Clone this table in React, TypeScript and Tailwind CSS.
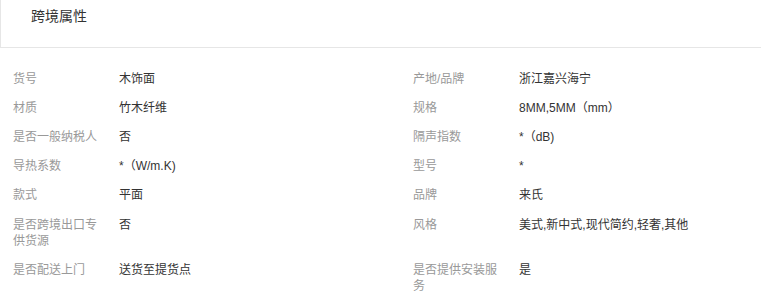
import React from "react";

const rows: [string, string, string, string][] = [
  ["货号", "木饰面", "产地/品牌", "浙江嘉兴海宁"],
  ["材质", "竹木纤维", "规格", "8MM,5MM（mm）"],
  ["是否一般纳税人", "否", "隔声指数", "*（dB)"],
  ["导热系数", "*（W/m.K)", "型号", "*"],
  ["款式", "平面", "品牌", "来氏"],
  ["是否跨境出口专供货源", "否", "风格", "美式,新中式,现代简约,轻奢,其他"],
  ["是否配送上门", "送货至提货点", "是否提供安装服务", "是"],
];

export default function App() {
  return (
    <div
      className="w-[761px] h-[291px] overflow-hidden bg-white"
      style={{ fontFamily: '"Liberation Sans", "Noto Sans CJK SC", sans-serif' }}
    >
      <div className="h-[48px] border-l border-b border-[#e6e6e6] pl-[30px] pt-[7px] text-[14px] leading-[18px] text-[#333]">
        跨境属性
      </div>
      <div className="mt-[16px] pl-[13px] grid grid-cols-[106px_294px_106px_1fr] text-[12px] leading-[16px]">
        {rows.map((r, i) => (
          <React.Fragment key={i}>
            <div className="py-[6.6px] pr-[14px] text-[#999]">{r[0]}</div>
            <div className="py-[6.6px] text-[#333]">{r[1]}</div>
            <div className="py-[6.6px] pr-[14px] text-[#999]">{r[2]}</div>
            <div className="py-[6.6px] text-[#333]">{r[3]}</div>
          </React.Fragment>
        ))}
      </div>
    </div>
  );
}
